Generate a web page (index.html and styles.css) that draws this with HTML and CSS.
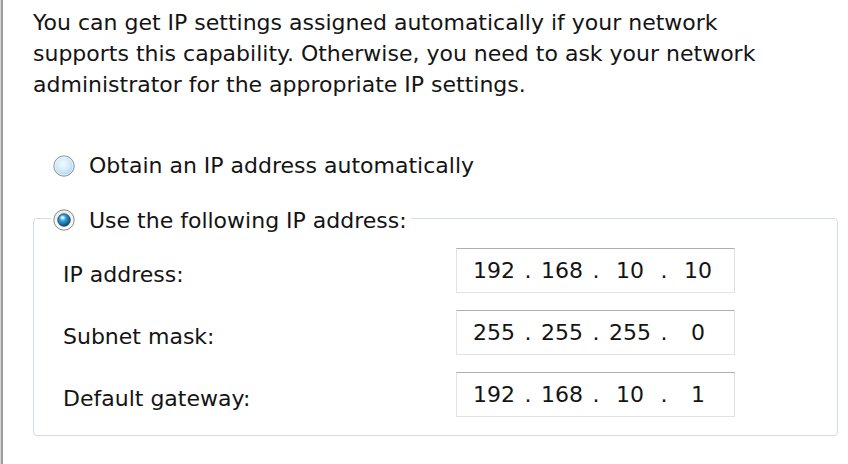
FILE: index.html
```html
<!DOCTYPE html>
<html>
<head>
<meta charset="utf-8">
<link rel="stylesheet" href="styles.css">
</head>
<body>
<div class="frame">
  <p class="intro">You can get IP settings assigned automatically if your network<br>supports this capability. Otherwise, you need to ask your network<br>administrator for the appropriate IP settings.</p>
  <div class="option first">
    <svg class="radio" viewBox="0 0 22 22" width="22" height="22">
      <defs>
        <radialGradient id="offFill" cx="0.45" cy="0.4" r="0.65">
          <stop offset="0" stop-color="#f4fbff"/>
          <stop offset="0.55" stop-color="#cfe9f8"/>
          <stop offset="1" stop-color="#9ccdeb"/>
        </radialGradient>
      </defs>
      <circle cx="11" cy="11" r="10.2" fill="url(#offFill)" stroke="#8c979f" stroke-width="1"/>
      <circle cx="11" cy="11" r="9" fill="none" stroke="#ffffff" stroke-opacity="0.55" stroke-width="1"/>
    </svg>
    <span class="opt-text">Obtain an IP address automatically</span>
  </div>
  <fieldset class="group">
    <legend class="option legend">
      <svg class="radio" viewBox="0 0 22 22" width="22" height="22">
        <defs>
          <linearGradient id="ringFill" x1="0" y1="0" x2="0" y2="1">
            <stop offset="0" stop-color="#e9e9e9"/>
            <stop offset="1" stop-color="#ffffff"/>
          </linearGradient>
          <radialGradient id="dotFill" cx="0.4" cy="0.35" r="0.7">
            <stop offset="0" stop-color="#b6ecff"/>
            <stop offset="0.4" stop-color="#2a9ad2"/>
            <stop offset="1" stop-color="#0a3f68"/>
          </radialGradient>
        </defs>
        <circle cx="11" cy="11" r="10.2" fill="url(#ringFill)" stroke="#8a8a8a" stroke-width="1"/>
        <circle cx="11" cy="11" r="6.3" fill="url(#dotFill)" stroke="#1d3d57" stroke-width="0.7"/>
        <ellipse cx="9.6" cy="8.6" rx="2.2" ry="1.4" fill="#ffffff" fill-opacity="0.6"/>
      </svg>
      <span class="opt-text">Use the following IP address:</span>
    </legend>
    <div class="row">
      <span class="label">IP address:</span>
      <div class="ipbox"><span class="oct">192</span><span class="dot">.</span><span class="oct">168</span><span class="dot">.</span><span class="oct">10</span><span class="dot">.</span><span class="oct">10</span></div>
    </div>
    <div class="row">
      <span class="label">Subnet mask:</span>
      <div class="ipbox"><span class="oct">255</span><span class="dot">.</span><span class="oct">255</span><span class="dot">.</span><span class="oct">255</span><span class="dot">.</span><span class="oct">0</span></div>
    </div>
    <div class="row">
      <span class="label">Default gateway:</span>
      <div class="ipbox"><span class="oct">192</span><span class="dot">.</span><span class="oct">168</span><span class="dot">.</span><span class="oct">10</span><span class="dot">.</span><span class="oct">1</span></div>
    </div>
  </fieldset>
</div>
</body>
</html>
```
FILE: styles.css
```css
html, body {
  margin: 0;
  padding: 0;
  background: #ffffff;
}
body {
  font-family: "DejaVu Sans", "Noto Sans", sans-serif;
  font-size: 22px;
  color: #141414;
}
.frame {
  height: 464px;
  box-sizing: border-box;
  margin-left: 1px;
  border-left: 2px solid #9d9d9d;
  box-shadow: -1px 0 0 #d6d6d6;
  overflow: hidden;
}
.intro {
  margin: 7px 0 0 30px;
  line-height: 31px;
}
.option {
  display: flex;
  align-items: center;
  line-height: 24px;
}
.option.first {
  margin: 54px 0 0 50px;
  height: 24px;
}
.radio {
  flex: 0 0 auto;
  display: block;
}
.opt-text {
  margin-left: 14px;
}
.group {
  margin: 25px 10px 0 30px;
  padding: 15px 0 18px 17px;
  border: 1px solid #d3dce3;
  border-radius: 4px;
  min-width: 0;
}
.legend {
  padding: 6px 4px 0 2px;
  height: 24px;
}
.legend .radio {
  margin-top: -2px;
}
.row {
  display: flex;
  align-items: center;
  height: 45px;
  padding-left: 12px;
  margin-bottom: 17px;
}
.row:last-child {
  margin-bottom: 0;
}
.label {
  width: 393px;
  margin-top: 8px;
  line-height: 24px;
}
.ipbox {
  width: 279px;
  height: 45px;
  box-sizing: border-box;
  border: 1px solid #dfe3e8;
  border-top-color: #acaeb3;
  display: flex;
  align-items: center;
  padding-left: 11px;
  line-height: 24px;
}
.oct {
  width: 52px;
  text-align: center;
}
.dot {
  width: 16px;
  text-align: center;
}
```
